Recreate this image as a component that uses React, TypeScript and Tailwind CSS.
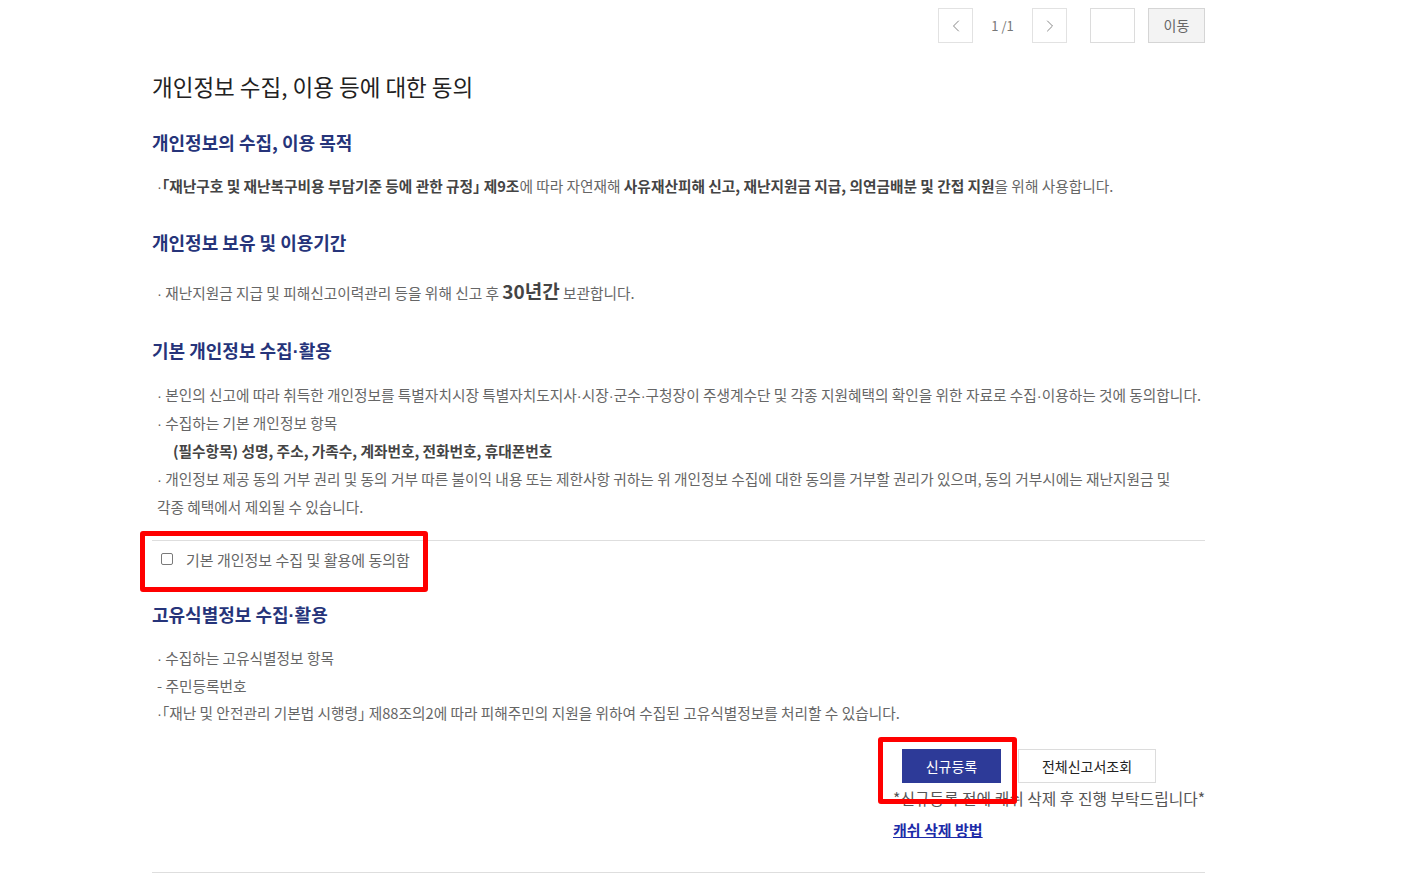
import { ChevronLeft, ChevronRight } from "lucide-react";

const font = { fontFamily: '"Noto Sans CJK KR", "Noto Sans", sans-serif' };

function Dot() {
  return <span className="font-['Liberation_Sans'] leading-none">·</span>;
}

function Heading({ children, className = "" }: { children: React.ReactNode; className?: string }) {
  return (
    <h2 className={`text-[18px] leading-[24px] font-bold text-[#26347a] ${className}`}>{children}</h2>
  );
}

function Line({ children, className = "" }: { children: React.ReactNode; className?: string }) {
  return <p className={`text-[14.7px] leading-[28px] text-[#666] pl-[5px] ${className}`}>{children}</p>;
}

export default function App() {
  return (
    <div className="bg-white min-h-[880px]" style={font}>
      <div className="ml-[152px] w-[1053px] pt-2">
        {/* paging */}
        <div className="flex items-center justify-end h-[35px]">
          <button className="w-[35px] h-[35px] border border-[#e2e2e2] flex items-center justify-center text-[#888]">
            <ChevronLeft size={20} strokeWidth={1.2} />
          </button>
          <span className="w-[59px] text-center text-[13px] text-[#777]">1 /1</span>
          <button className="w-[35px] h-[35px] border border-[#e2e2e2] flex items-center justify-center text-[#888]">
            <ChevronRight size={20} strokeWidth={1.2} />
          </button>
          <input className="ml-[23px] w-[45px] h-[35px] border border-[#dcdcdc] outline-none" />
          <button className="ml-[13px] w-[57px] h-[35px] border border-[#d5d5d5] bg-[#f3f3f3] text-[14px] text-[#666]">
            이동
          </button>
        </div>

        <h1 className="mt-[28px] text-[22.5px] leading-[30px] text-[#222]">개인정보 수집, 이용 등에 대한 동의</h1>

        <Heading className="mt-[29px]">개인정보의 수집, 이용 목적</Heading>
        <Line className="mt-[18px]">
          <Dot />
          <b className="text-[#444]">｢재난구호 및 재난복구비용 부담기준 등에 관한 규정｣ 제9조</b>에 따라 자연재해{" "}
          <b className="text-[#444]">사유재산피해 신고, 재난지원금 지급, 의연금배분 및 간접 지원</b>을 위해 사용합니다.
        </Line>

        <Heading className="mt-[30px]">개인정보 보유 및 이용기간</Heading>
        <Line className="mt-[25px]">
          <Dot /> 재난지원금 지급 및 피해신고이력관리 등을 위해 신고 후{" "}
          <b className="text-[19px] leading-none text-[#444]">30년간</b> 보관합니다.
        </Line>

        <Heading className="mt-[31px]">
          기본 개인정보 수집<Dot />활용
        </Heading>
        <div className="mt-[19px]">
          <Line>
            <Dot /> 본인의 신고에 따라 취득한 개인정보를 특별자치시장 특별자치도지사<Dot />시장<Dot />군수<Dot />
            구청장이 주생계수단 및 각종 지원혜택의 확인을 위한 자료로 수집<Dot />이용하는 것에 동의합니다.
          </Line>
          <Line>
            <Dot /> 수집하는 기본 개인정보 항목
          </Line>
          <Line className="pl-[21px]">
            <b className="text-[#444]">(필수항목) 성명, 주소, 가족수, 계좌번호, 전화번호, 휴대폰번호</b>
          </Line>
          <Line>
            <Dot /> 개인정보 제공 동의 거부 권리 및 동의 거부 따른 불이익 내용 또는 제한사항 귀하는 위 개인정보 수집에
            대한 동의를 거부할 권리가 있으며, 동의 거부시에는 재난지원금 및
            <br />
            각종 혜택에서 제외될 수 있습니다.
          </Line>
        </div>

        <div className="mt-[19px] border-t border-[#dedede]" />
        <div className="relative h-[38px] flex items-center">
          <label className="flex items-center pl-[9px] text-[15px] text-[#666]">
            <input
              type="checkbox"
              className="appearance-none w-[12px] h-[12px] border border-[#7a7a7a] rounded-[2px] bg-white -mt-[3px]"
            />
            <span className="ml-[13px]">기본 개인정보 수집 및 활용에 동의함</span>
          </label>
          <div className="absolute -left-[12px] -top-[10px] w-[288px] h-[61px] border-[5px] border-[#ff0000] rounded-[3px] pointer-events-none" />
        </div>

        <Heading className="mt-[23px]">
          고유식별정보 수집<Dot />활용
        </Heading>
        <div className="mt-[18px]">
          <Line>
            <Dot /> 수집하는 고유식별정보 항목
          </Line>
          <Line>- 주민등록번호</Line>
          <Line className="-mt-[1px]">
            <Dot />
            ｢재난 및 안전관리 기본법 시행령｣ 제88조의2에 따라 피해주민의 지원을 위하여 수집된 고유식별정보를 처리할 수
            있습니다.
          </Line>
        </div>

        <div className="mt-[22px] ml-auto w-[312px]">
          <div className="flex pl-[9px]">
            <div className="relative">
              <button className="w-[99px] h-[34px] bg-[#2d3a98] text-white text-[14px]">신규등록</button>
              <div className="absolute -left-[24px] -top-[12px] w-[139px] h-[67px] border-[5px] border-[#ff0000] rounded-[3px] pointer-events-none z-10" />
            </div>
            <button className="ml-[17px] w-[138px] h-[34px] border border-[#dcdcdc] bg-white text-[14px] text-[#222]">
              전체신고서조회
            </button>
          </div>
          <p className="mt-[6px] text-[15.8px] leading-[20px] text-[#555] text-right whitespace-nowrap">
            *신규등록 전에 캐쉬 삭제 후 진행 부탁드립니다*
          </p>
          <a href="#" className="block mt-[11px] text-[15px] leading-[20px] font-bold text-[#1d2ba8] underline">
            캐쉬 삭제 방법
          </a>
        </div>

        <div className="mt-[32px] border-t border-[#dedede]" />
      </div>
    </div>
  );
}
